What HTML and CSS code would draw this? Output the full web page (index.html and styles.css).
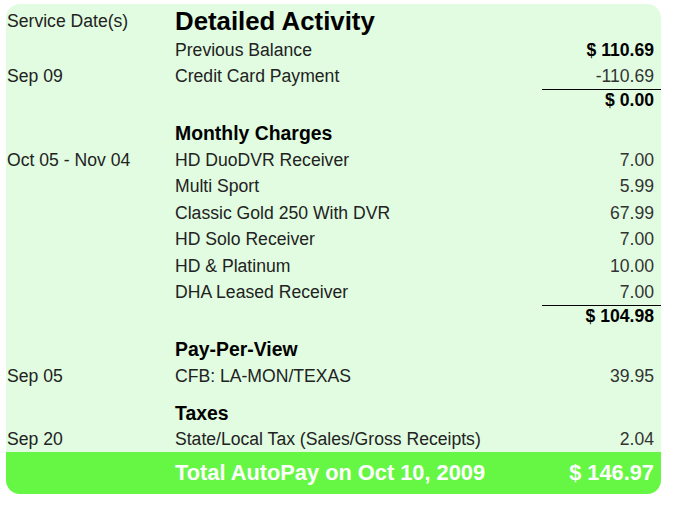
FILE: index.html
```html
<!DOCTYPE html>
<html>
<head>
<meta charset="utf-8">
<link rel="stylesheet" href="styles.css">
</head>
<body>
<div class="statement">
  <div class="row head">
    <div class="date">Service Date(s)</div>
    <div class="desc title">Detailed Activity</div>
    <div class="amt"></div>
  </div>
  <div class="row">
    <div class="date"></div>
    <div class="desc">Previous Balance</div>
    <div class="amt strong">$ 110.69</div>
  </div>
  <div class="row">
    <div class="date">Sep 09</div>
    <div class="desc">Credit Card Payment</div>
    <div class="amt">-110.69</div>
  </div>
  <div class="row sub">
    <div class="date"></div>
    <div class="desc"></div>
    <div class="amt strong rule">$ 0.00</div>
  </div>

  <div class="row section">
    <div class="date"></div>
    <div class="desc heading">Monthly Charges</div>
    <div class="amt"></div>
  </div>
  <div class="row">
    <div class="date">Oct 05 - Nov 04</div>
    <div class="desc">HD DuoDVR Receiver</div>
    <div class="amt">7.00</div>
  </div>
  <div class="row">
    <div class="date"></div>
    <div class="desc">Multi Sport</div>
    <div class="amt">5.99</div>
  </div>
  <div class="row">
    <div class="date"></div>
    <div class="desc">Classic Gold 250 With DVR</div>
    <div class="amt">67.99</div>
  </div>
  <div class="row">
    <div class="date"></div>
    <div class="desc">HD Solo Receiver</div>
    <div class="amt">7.00</div>
  </div>
  <div class="row">
    <div class="date"></div>
    <div class="desc">HD &amp; Platinum</div>
    <div class="amt">10.00</div>
  </div>
  <div class="row">
    <div class="date"></div>
    <div class="desc">DHA Leased Receiver</div>
    <div class="amt">7.00</div>
  </div>
  <div class="row sub">
    <div class="date"></div>
    <div class="desc"></div>
    <div class="amt strong rule">$ 104.98</div>
  </div>

  <div class="row section">
    <div class="date"></div>
    <div class="desc heading">Pay-Per-View</div>
    <div class="amt"></div>
  </div>
  <div class="row">
    <div class="date">Sep 05</div>
    <div class="desc">CFB: LA-MON/TEXAS</div>
    <div class="amt">39.95</div>
  </div>

  <div class="row section">
    <div class="date"></div>
    <div class="desc heading">Taxes</div>
    <div class="amt"></div>
  </div>
  <div class="row">
    <div class="date">Sep 20</div>
    <div class="desc">State/Local Tax (Sales/Gross Receipts)</div>
    <div class="amt">2.04</div>
  </div>

  <div class="row total">
    <div class="date"></div>
    <div class="desc">Total AutoPay on Oct 10, 2009</div>
    <div class="amt">$ 146.97</div>
  </div>
</div>
</body>
</html>
```

FILE: styles.css
```css
html, body {
  margin: 0;
  padding: 0;
  background: #ffffff;
}

body {
  padding: 4px 0 0 6px;
  font-family: "Liberation Sans", Arial, sans-serif;
  font-size: 17.6px;
  color: #222222;
}

.statement {
  width: 655px;
  background: #e1fce0;
  border-radius: 14px;
}

.row {
  display: grid;
  grid-template-columns: 169px 1fr 119px;
  height: 26.5px;
  align-items: center;
}

.row > div {
  padding-top: 3px;
}

.date {
  padding-left: 1px;
  white-space: nowrap;
}

.desc {
  white-space: nowrap;
}

.amt {
  padding-right: 7px;
  text-align: right;
  color: #333333;
  white-space: nowrap;
}

.head {
  height: 31.5px;
}

.title {
  font-size: 25.8px;
  font-weight: bold;
  color: #000000;
}

.heading {
  font-size: 19.4px;
  font-weight: bold;
  color: #000000;
}

.strong {
  font-weight: bold;
  color: #000000;
}

.sub {
  height: 20px;
}

.row.sub > div {
  padding-top: 0;
}

.rule {
  align-self: stretch;
  display: flex;
  align-items: center;
  justify-content: flex-end;
  border-top: 1px solid #000000;
}

.section {
  margin-top: 10.5px;
}

.total {
  height: 42.5px;
  background: #66f744;
  border-radius: 0 0 14px 14px;
  color: #ffffff;
  font-size: 21.8px;
  font-weight: bold;
}

.row.total > div {
  padding-top: 1px;
}

.total .amt {
  color: #ffffff;
}
```
